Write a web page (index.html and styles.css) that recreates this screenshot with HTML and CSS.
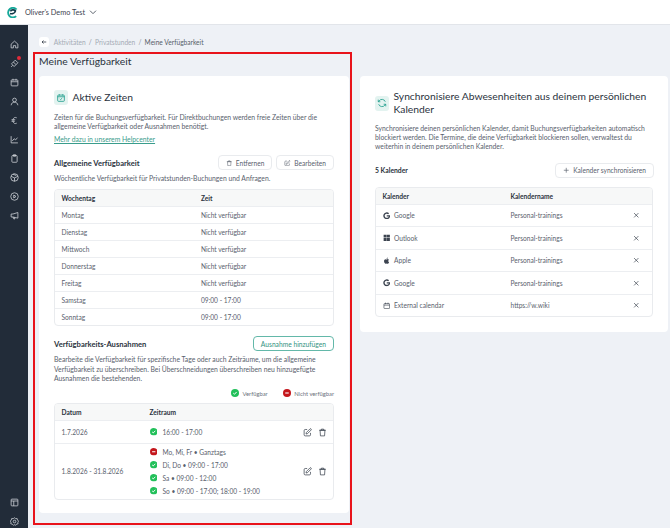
FILE: index.html
```html
<!DOCTYPE html>
<html>
    <head>
        <meta charset="UTF-8">
        <title>Meine Verfügbarkeit</title>
        <link rel="stylesheet" href="styles.css">
    </head>
    <body>
        <svg class="defs" width="0" height="0">
            <symbol id="ok" viewBox="0 0 16 16"><circle cx="8" cy="8" r="8" fill="#22c05a"/><path d="M4.6 8.3l2.3 2.2 4.4-4.6" fill="none" stroke="#fff" stroke-width="2"/></symbol>
            <symbol id="no" viewBox="0 0 16 16"><circle cx="8" cy="8" r="8" fill="#c4161c"/><path d="M4.5 8h7" fill="none" stroke="#fff" stroke-width="2.2"/></symbol>
            <symbol id="edit" viewBox="0 0 24 24"><path d="M11 4H6a3 3 0 0 0-3 3v11a3 3 0 0 0 3 3h11a3 3 0 0 0 3-3v-5" fill="none" stroke="currentColor" stroke-width="2"/><path d="M18.5 2.5a2.1 2.1 0 0 1 3 3L12 15l-4 1 1-4z" fill="none" stroke="currentColor" stroke-width="2"/></symbol>
            <symbol id="trash" viewBox="0 0 24 24"><path d="M3 6h18M9 6V3h6v3M5.5 6l1 15h11l1-15z" fill="none" stroke="currentColor" stroke-width="2"/></symbol>
            <symbol id="close" viewBox="0 0 24 24"><path d="M4 4l16 16M20 4L4 20" fill="none" stroke="currentColor" stroke-width="2.6"/></symbol>
            <symbol id="google" viewBox="0 0 24 24"><path d="M12 10v4.2h6.6c-.6 2.8-3 4.4-6.6 4.4a6.6 6.6 0 1 1 4.4-11.5l3.1-3.1A11 11 0 1 0 12 23c6.300 0 10.800-4.400 10.800-11 0-.7-.1-1.400-.2-2z" fill="currentColor"/></symbol>
        </svg>

        <header class="topbar">
            <svg class="logo" viewBox="0 0 24 24"><path d="M21 5.500A10.500 10.500 0 1 0 20 20" fill="none" stroke="#17a89a" stroke-width="4"/><path d="M6.500 14.500c5 1 11-1 12-6-3-3-9-3-11 1" fill="none" stroke="#123a4a" stroke-width="3.500"/></svg>
            <span class="org">Oliver's Demo Test</span>
            <svg class="chevron" viewBox="0 0 24 24"><path d="M3 8l9 9 9-9" fill="none" stroke="currentColor" stroke-width="2.500"/></svg>
        </header>

        <div class="layout">
            <nav class="sidebar">
                <svg viewBox="0 0 24 24"><path d="M3 11l9-8 9 8v10h-6v-6H9v6H3z"/></svg>
                <span class="nav_alert"><svg viewBox="0 0 24 24"><path d="M14 3l7 7-5 5-7-7zM9 8l-5 5 7 7 5-5M3 21l4-4"/></svg></span>
                <svg viewBox="0 0 24 24"><rect x="3" y="5" width="18" height="16" rx="2"/><path d="M3 10h18M8 2v5M16 2v5"/></svg>
                <svg viewBox="0 0 24 24"><circle cx="12" cy="8" r="5"/><path d="M3 22c1-6 4-8 9-8s8 2 9 8"/></svg>
                <svg viewBox="0 0 24 24"><path d="M18 5c-5-3-10 0-10 7s5 10 10 7M4 10h10M4 14h9"/></svg>
                <svg viewBox="0 0 24 24"><path d="M3 3v18h18M6 16l5-6 4 3 5-6"/></svg>
                <svg viewBox="0 0 24 24"><rect x="5" y="4" width="14" height="18" rx="2"/><path d="M9 2h6v4H9z"/></svg>
                <svg viewBox="0 0 24 24"><circle cx="12" cy="12" r="10"/><path d="M3 9l9 4 9-4M12 13v9M8 3l9 4"/></svg>
                <svg viewBox="0 0 24 24"><circle cx="12" cy="12" r="10"/><path d="M10 8l6 4-6 4z"/></svg>
                <svg viewBox="0 0 24 24"><path d="M21 4v15L8 16H3V8h5zM8 16l2 5h3l-1-4"/></svg>
                <div class="sidebar_end">
                    <svg viewBox="0 0 24 24"><rect x="3" y="3" width="18" height="18" rx="2"/><path d="M3 8h18M10 8v13"/></svg>
                    <svg viewBox="0 0 24 24"><circle cx="12" cy="12" r="3.500"/><path d="M12 2l3 2.500 4-.5 1 4 3 3-2 3 .5 4-4 1-2.500 3-3-1.500-3 1.500L6 19l-4-1 .5-4-2-3 3-3 1-4 4 .5z"/></svg>
                </div>
            </nav>

            <main class="main">
                <div class="crumbs">
                    <span class="back"><svg viewBox="0 0 24 24"><path d="M21 12H4M10 6l-6 6 6 6" fill="none" stroke="currentColor" stroke-width="3"/></svg></span>
                    <span class="crumb_link">Aktivitäten</span>
                    <span class="crumb_sep">/</span>
                    <span class="crumb_link">Privatstunden</span>
                    <span class="crumb_sep">/</span>
                    <span class="crumb_now">Meine Verfügbarkeit</span>
                </div>
                <h1 class="page_title">Meine Verfügbarkeit</h1>

                <div class="columns">
                    <section class="card">
                        <div class="card_head">
                            <span class="card_icon"><svg viewBox="0 0 24 24"><rect x="4" y="5" width="16" height="15" rx="2"/><path d="M4 9h16M8 3v3M16 3v3M9 14l2 2 4-4"/></svg></span>
                            <h2>Aktive Zeiten</h2>
                        </div>
                        <p class="text">Zeiten für die Buchungsverfügbarkeit. Für Direktbuchungen werden freie Zeiten über die allgemeine Verfügbarkeit oder Ausnahmen benötigt.</p>
                        <a class="help" href="#">Mehr dazu in unserem Helpcenter</a>

                        <div class="section_head first">
                            <h3>Allgemeine Verfügbarkeit</h3>
                            <div class="buttons">
                                <button class="btn"><svg><use href="#trash"/></svg>Entfernen</button>
                                <button class="btn"><svg><use href="#edit"/></svg>Bearbeiten</button>
                            </div>
                        </div>
                        <p class="text sub">Wöchentliche Verfügbarkeit für Privatstunden-Buchungen und Anfragen.</p>

                        <div class="table week">
                            <div class="row head"><span>Wochentag</span><span>Zeit</span></div>
                            <div class="row"><span>Montag</span><span>Nicht verfügbar</span></div>
                            <div class="row"><span>Dienstag</span><span>Nicht verfügbar</span></div>
                            <div class="row"><span>Mittwoch</span><span>Nicht verfügbar</span></div>
                            <div class="row"><span>Donnerstag</span><span>Nicht verfügbar</span></div>
                            <div class="row"><span>Freitag</span><span>Nicht verfügbar</span></div>
                            <div class="row"><span>Samstag</span><span>09:00 - 17:00</span></div>
                            <div class="row"><span>Sonntag</span><span>09:00 - 17:00</span></div>
                        </div>

                        <div class="section_head second">
                            <h3>Verfügbarkeits-Ausnahmen</h3>
                            <button class="btn btn_green">Ausnahme hinzufügen</button>
                        </div>
                        <p class="text sub">Bearbeite die Verfügbarkeit für spezifische Tage oder auch Zeiträume, um die allgemeine Verfügbarkeit zu überschreiben. Bei Überschneidungen überschreiben neu hinzugefügte Ausnahmen die bestehenden.</p>

                        <div class="legend">
                            <span><svg><use href="#ok"/></svg>Verfügbar</span>
                            <span><svg><use href="#no"/></svg>Nicht verfügbar</span>
                        </div>

                        <div class="table except">
                            <div class="row head"><span>Datum</span><span>Zeitraum</span></div>
                            <div class="row">
                                <span>1.7.2026</span>
                                <div class="slots">
                                    <span><svg><use href="#ok"/></svg>16:00 - 17:00</span>
                                </div>
                                <div class="actions"><svg><use href="#edit"/></svg><svg><use href="#trash"/></svg></div>
                            </div>
                            <div class="row">
                                <span>1.8.2026 - 31.8.2026</span>
                                <div class="slots">
                                    <span><svg><use href="#no"/></svg>Mo, Mi, Fr • Ganztags</span>
                                    <span><svg><use href="#ok"/></svg>Di, Do • 09:00 - 17:00</span>
                                    <span><svg><use href="#ok"/></svg>Sa • 09:00 - 12:00</span>
                                    <span><svg><use href="#ok"/></svg>So • 09:00 - 17:00; 18:00 - 19:00</span>
                                </div>
                                <div class="actions"><svg><use href="#edit"/></svg><svg><use href="#trash"/></svg></div>
                            </div>
                        </div>
                    </section>

                    <section class="card card_sync">
                        <div class="card_head">
                            <span class="card_icon"><svg viewBox="0 0 24 24"><path d="M20 9a8.500 8.500 0 0 0-15-2L3 9M3 4v5h5M4 15a8.500 8.500 0 0 0 15 2l2-2M21 20v-5h-5"/></svg></span>
                            <h2>Synchronisiere Abwesenheiten aus deinem persönlichen Kalender</h2>
                        </div>
                        <p class="text">Synchronisiere deinen persönlichen Kalender, damit Buchungsverfügbarkeiten automatisch blockiert werden. Die Termine, die deine Verfügbarkeit blockieren sollen, verwaltest du weiterhin in deinem persönlichen Kalender.</p>

                        <div class="section_head sync_head">
                            <h4>5 Kalender</h4>
                            <button class="btn btn_sync"><svg viewBox="0 0 24 24"><path d="M12 3v18M3 12h18" fill="none" stroke="currentColor" stroke-width="2.500"/></svg>Kalender synchronisieren</button>
                        </div>

                        <div class="table cals">
                            <div class="row head"><span>Kalender</span><span>Kalendername</span></div>
                            <div class="row">
                                <span class="cal"><svg><use href="#google"/></svg>Google</span><span>Personal-trainings</span>
                                <svg class="remove"><use href="#close"/></svg>
                            </div>
                            <div class="row">
                                <span class="cal"><svg viewBox="0 0 24 24"><path d="M2 2h9.500v9.500H2zM12.500 2H22v9.500h-9.500zM2 12.500h9.500V22H2zM12.500 12.500H22V22h-9.500z" fill="currentColor"/></svg>Outlook</span><span>Personal-trainings</span>
                                <svg class="remove"><use href="#close"/></svg>
                            </div>
                            <div class="row">
                                <span class="cal"><svg viewBox="0 0 24 24"><path d="M17 12.500c0-2.500 2-3.500 2.200-3.700-1.200-1.700-3-2-3.700-2-1.600-.2-3 .9-3.800.9s-2-.9-3.300-.9C6.700 6.900 5 7.900 4.200 9.400c-1.800 3-.5 7.500 1.200 10 .9 1.200 1.900 2.600 3.200 2.500 1.300 0 1.800-.8 3.300-.8s2 .8 3.300.8c1.400 0 2.300-1.200 3.100-2.400 1-1.400 1.400-2.800 1.400-2.800s-2.700-1-2.700-4.200zM14.500 5c.7-.9 1.200-2 1-3.200-1 0-2.200.7-2.900 1.500-.6.700-1.200 1.900-1 3 1.100.1 2.200-.5 2.900-1.300z" fill="currentColor"/></svg>Apple</span><span>Personal-trainings</span>
                                <svg class="remove"><use href="#close"/></svg>
                            </div>
                            <div class="row">
                                <span class="cal"><svg><use href="#google"/></svg>Google</span><span>Personal-trainings</span>
                                <svg class="remove"><use href="#close"/></svg>
                            </div>
                            <div class="row">
                                <span class="cal"><svg viewBox="0 0 24 24"><rect x="3" y="5" width="18" height="16" rx="2" fill="none" stroke="currentColor" stroke-width="2"/><path d="M3 10h18M8 2v5M16 2v5" fill="none" stroke="currentColor" stroke-width="2"/></svg>External calendar</span><span>https://w.wiki</span>
                                <svg class="remove"><use href="#close"/></svg>
                            </div>
                        </div>
                    </section>
                </div>
            </main>
        </div>

        <div class="marker"></div>
    </body>
</html>
```

FILE: styles.css
```css
*{
    box-sizing: border-box;
}
html,body{
    margin: 0;
    height: 100%;
    overflow: hidden;
}
body{
    font-family: "Lato", "Liberation Sans", sans-serif;
    color: #2b3340;
    background: #eef1f6;
    position: relative;
}
.defs{
    position: absolute;
}
.topbar{
    height: 25px;
    background: #fff;
    border-bottom: 1px solid #e2e5ea;
    display: flex;
    align-items: center;
    padding-left: 7px;
}
.logo{
    width: 11px;
    height: 11px;
}
.org{
    font-size: 7.300px;
    color: #3c4450;
    margin-left: 7px;
}
.chevron{
    width: 8px;
    height: 8px;
    margin-left: 4px;
    color: #3c4450;
}
.layout{
    display: flex;
    height: 503px;
}
.sidebar{
    width: 28px;
    flex: none;
    background: #222c39;
    display: flex;
    flex-direction: column;
    align-items: center;
    padding-top: 14.500px;
    gap: 10px;
}
.sidebar svg{
    width: 9px;
    height: 9px;
    display: block;
    fill: none;
    stroke: #d5d9df;
    stroke-width: 2;
}
.nav_alert{
    display: block;
    position: relative;
}
.nav_alert:after{
    position: absolute;
    top: -3px;
    left: 7px;
    content: "";
    width: 4px;
    height: 4px;
    border-radius: 50%;
    background: #e02b3a;
}
.sidebar_end{
    margin-top: auto;
    padding-bottom: 2.500px;
    display: flex;
    flex-direction: column;
    gap: 10px;
}
.main{
    flex: 1;
    padding: 11px 2px 0 11px;
    min-width: 0;
}
.crumbs{
    display: flex;
    align-items: center;
    height: 12px;
    font-size: 6.600px;
    gap: 3.200px;
}
.back{
    width: 10px;
    height: 10px;
    border-radius: 3px;
    background: #fff;
    display: flex;
    align-items: center;
    justify-content: center;
    margin-right: 1.500px;
}
.back svg{
    width: 6px;
    height: 6px;
}
.crumb_link{
    color: #a4abb5;
}
.crumb_sep{
    color: #8b929c;
}
.crumb_now{
    color: #555d69;
}
.page_title{
    font-size: 10.350px;
    font-weight: 400;
    line-height: 14px;
    margin: 5.500px 0 8.500px;
    color: #2b3340;
}
.columns{
    display: grid;
    grid-template-columns: 310px 308px;
    gap: 11px;
    align-items: start;
}
.card{
    background: #fff;
    border-radius: 4px;
    padding: 14px 15px;
    height: 437px;
}
.card_sync{
    height: 256px;
}
.card_head{
    display: flex;
    align-items: center;
    gap: 4.500px;
    margin-bottom: 7.500px;
}
.card_icon{
    width: 14px;
    height: 15px;
    flex: none;
    border-radius: 3px;
    background: #e3f3f0;
    display: flex;
    align-items: center;
    justify-content: center;
}
.card_icon svg{
    width: 10px;
    height: 10px;
    fill: none;
    stroke: #1e9e8c;
    stroke-width: 2;
}
h2{
    font-size: 10.300px;
    font-weight: 400;
    line-height: 13px;
    margin: 0;
    color: #2b3340;
}
.text{
    font-size: 6.800px;
    line-height: 9.400px;
    margin: 0;
    color: #59616d;
}
.help{
    display: block;
    font-size: 6.800px;
    line-height: 9px;
    margin-top: 4px;
    color: #3a9d8c;
}
.section_head{
    display: flex;
    align-items: center;
    justify-content: space-between;
    height: 15px;
}
.first{
    margin-top: 11px;
}
.second{
    margin-top: 10.500px;
}
h3{
    font-size: 7.600px;
    font-weight: 700;
    margin: 0;
    color: #2b3340;
}
h4{
    font-size: 6.800px;
    font-weight: 700;
    margin: 0;
    color: #2b3340;
}
.buttons{
    display: flex;
    gap: 4px;
}
.btn{
    font-family: inherit;
    font-size: 6.600px;
    height: 15px;
    padding: 0 7px;
    background: #fff;
    border: 1px solid #e9ebee;
    border-radius: 4px;
    color: #59616d;
    display: flex;
    align-items: center;
    gap: 3.500px;
}
.btn svg{
    width: 6.500px;
    height: 6.500px;
    flex: none;
}
.btn_green{
    font-size: 6.700px;
    border-color: #63b8a9;
    color: #33927f;
}
.sub{
    margin-top: 4px;
}
.table{
    border: 1px solid #e9ebee;
    border-radius: 4px;
    overflow: hidden;
    font-size: 6.600px;
    color: #59616d;
}
.week{
    margin-top: 5px;
}
.row{
    display: grid;
    align-items: center;
    padding-left: 6.500px;
    border-top: 1px solid #eceef1;
    height: 17px;
}
.week .row{
    grid-template-columns: 139.500px 1fr;
}
.legend{
    display: flex;
    justify-content: flex-end;
    gap: 15px;
    font-size: 5.800px;
    color: #6a717c;
    margin-top: 5px;
    height: 10px;
}
.legend span{
    display: flex;
    align-items: center;
    gap: 3.500px;
}
.legend svg{
    width: 8px;
    height: 8px;
}
.except{
    margin-top: 5px;
}
.except .row{
    grid-template-columns: 88px 1fr auto;
}
.except .row:nth-child(2){
    height: 22.500px;
}
.except .row:nth-child(3){
    height: 56px;
}
.slots{
    display: flex;
    flex-direction: column;
    gap: 4px;
}
.slots span{
    display: flex;
    align-items: center;
    gap: 5.500px;
    height: 9px;
}
.slots svg{
    width: 7.500px;
    height: 7.500px;
    flex: none;
}
.actions{
    display: flex;
    gap: 6px;
    padding-right: 6.500px;
    color: #3c4450;
}
.actions svg{
    width: 9px;
    height: 9px;
}
.sync_head{
    margin-top: 11px;
}
.btn_sync{
    margin-right: -1px;
}
.cals{
    margin-top: 9px;
}
.cals .row{
    grid-template-columns: 128px 1fr auto;
    height: 22.500px;
}
.cal{
    display: flex;
    align-items: center;
    gap: 4px;
}
.cal svg{
    width: 7.500px;
    height: 7.500px;
    flex: none;
    color: #3c4450;
}
.remove{
    width: 6.500px;
    height: 6.500px;
    margin-right: 13px;
    color: #3c4450;
}
.table .row.head{
    height: 16px;
    border-top: 0;
    background: #f7f8f8;
    font-weight: 700;
    color: #2b3340;
}
.marker{
    position: absolute;
    left: 33px;
    top: 52px;
    width: 319px;
    height: 473px;
    border: 2px solid #e8131b;
    pointer-events: none;
}
```
